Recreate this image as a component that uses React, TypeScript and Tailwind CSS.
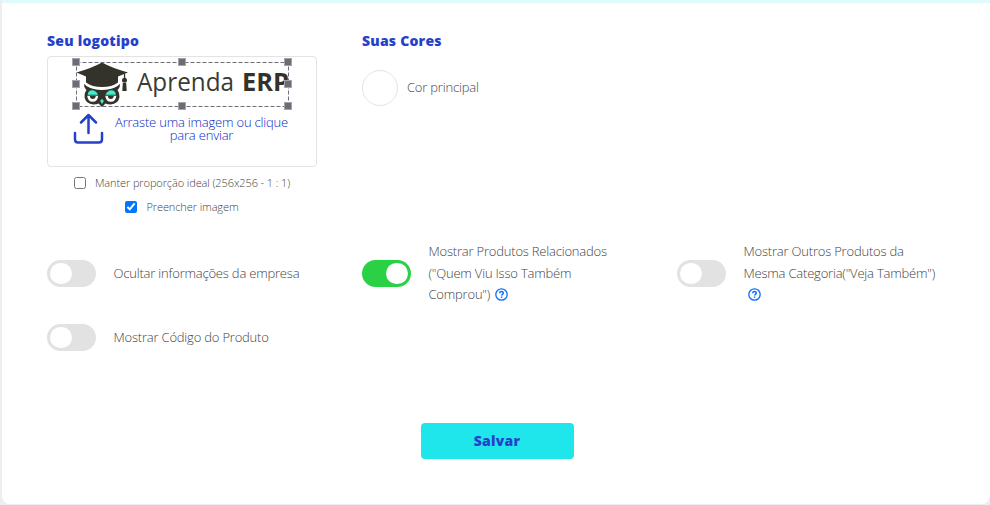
import type { ReactNode } from "react";

function Toggle({ on = false }: { on?: boolean }) {
  return (
    <span
      className={`flex h-[27px] w-[49px] shrink-0 items-center rounded-full px-[3px] ${
        on ? "justify-end bg-[#2bd145]" : "justify-start bg-[#e2e2e2]"
      }`}
    >
      <span className="h-[21px] w-[22px] rounded-full bg-white" />
    </span>
  );
}

function Help() {
  return (
    <svg className="inline-block h-[13px] w-[13px] align-[-2px]" viewBox="0 0 13 13" fill="none">
      <circle cx="6.5" cy="6.5" r="5.7" stroke="#0d6efd" strokeWidth="1.3" />
      <path d="M4.7 5.2c0-1 .8-1.6 1.8-1.6s1.8.6 1.8 1.5c0 1.2-1.7 1.2-1.7 2.5" stroke="#0d6efd" strokeWidth="1.5" />
      <path d="M5.8 8.500h1.500v1.400H5.800z" fill="#0d6efd" />
    </svg>
  );
}

function Option({ on, children }: { on?: boolean; children: ReactNode }) {
  return (
    <div className="flex items-center gap-[17.5px]">
      <Toggle on={on} />
      <span className="pt-px text-[13px] leading-[21.5px] font-light tracking-[-0.2px] whitespace-nowrap">{children}</span>
    </div>
  );
}

function Logo() {
  return (
    <svg className="block h-[53px] w-[222px]" viewBox="72 58 222 53">
      <g fill="#33322b">
        <path d="M84 83.500Q84 88 86.500 90q-2.500 3-2 7 1 7 9 7.500 3 0 5-1l3.500 3.500 3.500-3.500q2 1 5 1 8-.5 9-7.500.3-4-2-7 2.500-2 2.500-6.500-5 6.500-18 6.500t-18-6.500" />
        <path d="M76.500 72.500Q92 68 102 62.500q10 5.500 26 10L118 76.500v6q-6 4.500-16 4.500t-16-4.500v-6z" />
        <path d="M123.900 74h1.300v5h-1.300z" />
        <circle cx="124.500" cy="80.300" r="2.500" />
        <path d="M122.800 83h3.400l.5 8h-4.400z" />
      </g>
      <path d="M84 83q6 5.800 18 5.800t18-5.800" fill="none" stroke="#fff" strokeWidth="1.300" />
      <path d="M87.700 94.700q.3-4.500 4.300-4.500t6 4.500zM105.500 94.700q2-4.500 6-4.500t4.300 4.500z" fill="#3df0d0" />
      <path d="M87.200 95.700h11q-.5 6-5.500 6t-5.500-6M105.300 95.700h11q-.5 6-5.500 6t-5.500-6" fill="#fff" />
      <path d="M89.800 96h6q-.3 3-3 3t-3-3M107.800 96h6q-.3 3-3 3t-3-3" fill="#33322b" />
      <path d="m102 98.800 1.900 2.200-1.900 3-1.900-3z" fill="#3df0d0" />
      <text x="137" y="91" fontSize="25" fill="#3c3b35" textLength="97" lengthAdjust="spacingAndGlyphs" className="font-['Open_Sans']">Aprenda</text>
      <text x="242" y="91" fontSize="25" fontWeight="700" fill="#33322b" textLength="47" lengthAdjust="spacingAndGlyphs" className="font-['Open_Sans']">ERP</text>
      <rect x="76.500" y="62.500" width="212" height="44" fill="none" stroke="#6e6e76" strokeDasharray="4 2" />
      {[76, 182, 288].map((x) =>
        [62, 84, 106].map((y) =>
          x === 182 && y === 84 ? null : (
            <rect key={`${x}-${y}`} x={x - 3.5} y={y - 3.5} width="7" height="7" fill="#6c6c76" stroke="#a4a4aa" />
          ),
        ),
      )}
    </svg>
  );
}

export default function App() {
  return (
    <div className="h-[505px] w-[990px] overflow-hidden bg-[#eeeeee] pl-[2px] font-['Open_Sans',sans-serif] text-[#444]">
      <div className="h-[504px] rounded-b-lg border-t-[3px] border-[#dffbf9] bg-white pl-[45px]">
        <div className="grid h-[226px] grid-cols-[315px_315px] pt-[28px]">
          <section>
            <h2 className="h-[25px] text-[14px] leading-[20px] font-extrabold tracking-[0.22px] text-[#2541cc]">Seu logotipo</h2>
            <div className="h-[111px] w-[270px] rounded-[4px] border border-[#e3e3e3] pt-px pl-[24px]">
              <Logo />
              <div className="flex items-start">
                <svg className="mt-[2px] ml-[0.5px] h-[31px] w-[31px] shrink-0" viewBox="0 0 31 31" fill="none" stroke="#2541cc" strokeWidth="2.5" strokeLinecap="round" strokeLinejoin="round">
                  <path d="M15.500 20V2M8 9.500 15.500 2 23 9.500M2 20v6.500q0 3 3 3h21q3 0 3-3V20" />
                </svg>
                <p className="mt-[5px] ml-[5px] w-[186px] text-center text-[13px] leading-[13px] font-light tracking-[-0.2px] whitespace-nowrap text-[#0a28c8]">
                  Arraste uma imagem ou clique
                  <br />
                  para enviar
                </p>
              </div>
            </div>
            <div className="flex h-[24px] w-[270px] translate-y-[4px] items-center justify-center gap-[9px] text-[11px] font-light tracking-[-0.1px] whitespace-nowrap">
              <input type="checkbox" className="m-0 h-[12px] w-[12px]" />
              Manter proporção ideal (256x256 - 1 : 1)
            </div>
            <div className="flex h-[24px] w-[270px] translate-y-[4px] items-center justify-center gap-[9px] text-[11px] font-light tracking-[-0.1px] whitespace-nowrap">
              <input type="checkbox" defaultChecked className="m-0 h-[12px] w-[12px]" />
              Preencher imagem
            </div>
          </section>
          <section>
            <h2 className="text-[14px] leading-[20px] font-extrabold tracking-[0.22px] text-[#2541cc]">Suas Cores</h2>
            <div className="mt-[19px] flex items-center gap-[9px] text-[13px] font-light tracking-[-0.2px]">
              <span className="h-[36px] w-[36px] rounded-full border border-[#e3e3e3]" />
              Cor principal
            </div>
          </section>
        </div>
        <div className="grid grid-cols-[315px_315px_300px] grid-rows-[64px_64px] pt-[12px]">
          <Option>Ocultar informações da empresa</Option>
          <Option on>
            Mostrar Produtos Relacionados
            <br />
            ("Quem Viu Isso Também
            <br />
            Comprou") <span className="ml-[1.5px]"><Help /></span>
          </Option>
          <Option>
            Mostrar Outros Produtos da
            <br />
            Mesma Categoria("Veja Também")
            <br />
            <span className="ml-[4.5px]"><Help /></span>
          </Option>
          <Option>Mostrar Código do Produto</Option>
        </div>
        <button className="mt-[54px] ml-[374px] h-[36px] w-[153px] rounded-[4px] bg-[#1ee6ea] pr-px pb-[2px] text-[14px] font-extrabold tracking-[0.22px] text-[#2541cc]">
          Salvar
        </button>
      </div>
    </div>
  );
}
